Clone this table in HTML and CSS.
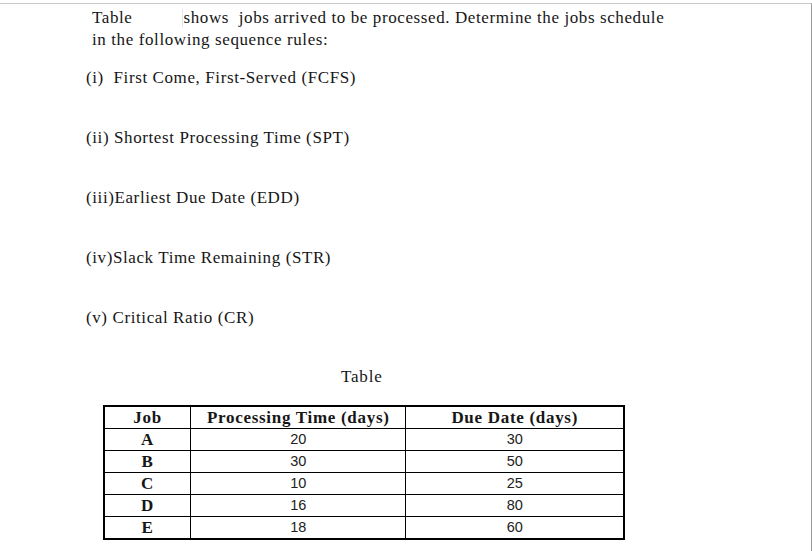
FILE: index.html
```html
<!DOCTYPE html>
<html>
<head>
<meta charset="utf-8">
<link rel="stylesheet" href="styles.css">
</head>
<body>
<div class="page">
  <p class="intro"><span class="ref">Table</span><span class="gap"></span>shows&nbsp; jobs arrived to be processed. Determine the jobs schedule<br>in the following sequence rules:</p>
  <ol class="rules">
    <li>(i)&nbsp; First Come, First-Served (FCFS)</li>
    <li>(ii) Shortest Processing Time (SPT)</li>
    <li>(iii)Earliest Due Date (EDD)</li>
    <li>(iv)Slack Time Remaining (STR)</li>
    <li>(v) Critical Ratio (CR)</li>
  </ol>
  <div class="caption">Table</div>
  <table class="jobs">
    <colgroup><col class="c1"><col class="c2"><col class="c3"></colgroup>
    <thead>
      <tr><th>Job</th><th>Processing Time (days)</th><th>Due Date (days)</th></tr>
    </thead>
    <tbody>
      <tr><th>A</th><td>20</td><td>30</td></tr>
      <tr><th>B</th><td>30</td><td>50</td></tr>
      <tr><th>C</th><td>10</td><td>25</td></tr>
      <tr><th>D</th><td>16</td><td>80</td></tr>
      <tr><th>E</th><td>18</td><td>60</td></tr>
    </tbody>
  </table>
</div>
</body>
</html>
```
FILE: styles.css
```css
html, body {
  margin: 0;
  padding: 0;
  background: #fff;
}
body {
  font-family: "Liberation Serif", "Times New Roman", serif;
  color: #161616;
}
.page {
  margin-top: 3px;
  width: 811px;
  height: 548px;
  border-top: 1px solid #c9c9c9;
  border-right: 1px solid #9a9a9a;
  box-sizing: content-box;
  padding-top: 3px;
  overflow: hidden;
}
.intro {
  margin: 0 0 0 92px;
  font-size: 17px;
  letter-spacing: 0.6px;
  line-height: 22px;
}
.gap {
  display: inline-block;
  width: 49px;
  height: 18px;
  vertical-align: -4px;
  border-right: 1px solid #e4e4e4;
  margin-right: 1px;
}
.rules {
  list-style: none;
  margin: 16px 0 0 86px;
  padding: 0;
  font-size: 17px;
  letter-spacing: 0.6px;
}
.rules li {
  height: 60px;
  line-height: 22px;
}
.caption {
  margin: -1px 0 0 341px;
  font-size: 17px;
  letter-spacing: 0.8px;
  line-height: 22px;
}
.jobs {
  margin: 17px 0 0 103px;
  border-collapse: collapse;
  width: 522px;
  border: 2px solid #000;
}
.c1 { width: 87px; }
.c2 { width: 216px; }
.c3 { width: 219px; }
.jobs th, .jobs td {
  border: 1.5px solid #000;
  height: 21px;
  padding: 0;
  text-align: center;
  line-height: 21px;
}
.jobs th {
  font-family: "Liberation Serif", serif;
  font-weight: bold;
  font-size: 17px;
  letter-spacing: 0.7px;
}
.jobs td {
  font-family: "Liberation Sans", Arial, sans-serif;
  font-size: 14.5px;
  color: #222;
}
```
